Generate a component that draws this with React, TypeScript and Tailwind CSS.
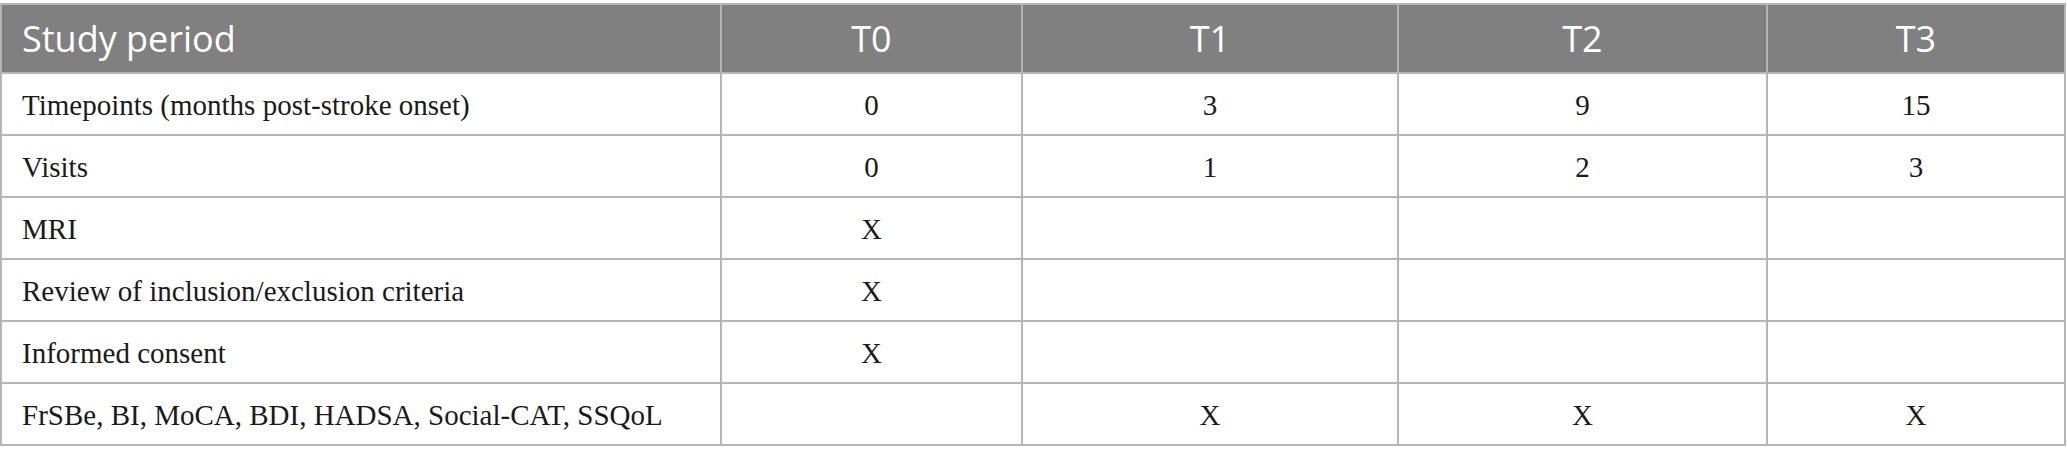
import React from "react";

const rows: [string, string, string, string, string][] = [
  ["Timepoints (months post-stroke onset)", "0", "3", "9", "15"],
  ["Visits", "0", "1", "2", "3"],
  ["MRI", "X", "", "", ""],
  ["Review of inclusion/exclusion criteria", "X", "", "", ""],
  ["Informed consent", "X", "", "", ""],
  ["FrSBe, BI, MoCA, BDI, HADSA, Social-CAT, SSQoL", "", "X", "X", "X"],
];

const widths = ["w-[720px]", "w-[301px]", "w-[376px]", "w-[369px]", "w-[298px]"];

export default function App() {
  return (
    <div className="w-[2067px] h-[460px] bg-white pt-[3px]">
      <table className="w-[2064px] table-fixed border-collapse border-2 border-[#b5b5b5]">
        <colgroup>
          {widths.map((w, i) => (
            <col key={i} className={w} />
          ))}
        </colgroup>
        <thead>
          <tr className="h-[69px] bg-[#7f807f] text-white text-[36px] leading-none font-['Open_Sans',sans-serif]">
            <th className="border-2 border-[#b5b5b5] text-left font-normal pl-[20px]">Study period</th>
            <th className="border-2 border-[#b5b5b5] text-center font-normal">T0</th>
            <th className="border-2 border-[#b5b5b5] text-center font-normal">T1</th>
            <th className="border-2 border-[#b5b5b5] text-center font-normal">T2</th>
            <th className="border-2 border-[#b5b5b5] text-center font-normal">T3</th>
          </tr>
        </thead>
        <tbody className="text-[29px] leading-none text-[#1a1a1a] font-['Liberation_Serif',serif]">
          {rows.map((r, i) => (
            <tr key={i} className="h-[62px]">
              {r.map((c, j) => (
                <td
                  key={j}
                  className={
                    j === 0
                      ? "border-2 border-[#b5b5b5] text-left pl-[20px] pt-[2px]"
                      : "border-2 border-[#b5b5b5] text-center pt-[2px]"
                  }
                >
                  {c}
                </td>
              ))}
            </tr>
          ))}
        </tbody>
      </table>
    </div>
  );
}
